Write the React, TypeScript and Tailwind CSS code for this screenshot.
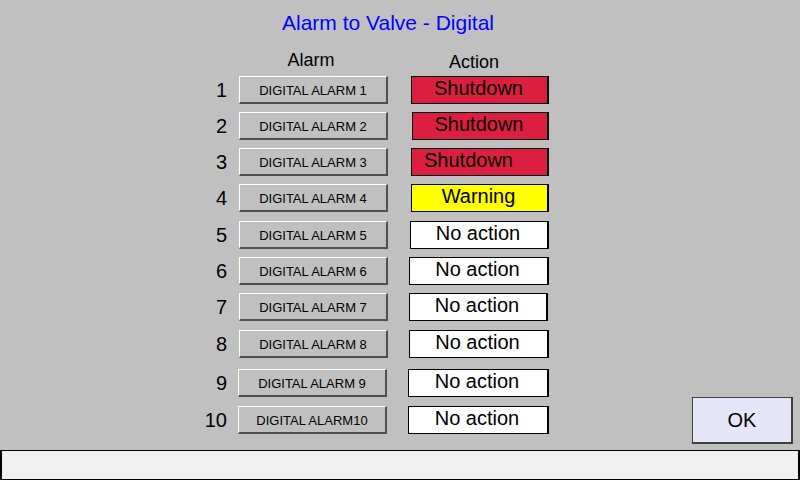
import React from "react";

type Row = {
  n: string;
  label: string;
  action: string;
  kind: "red" | "yellow" | "white";
  rowCls: string;
  btnCls: string;
  actCls: string;
};

const rows: Row[] = [
  { n: "1", label: "DIGITAL ALARM 1", action: "Shutdown", kind: "red", rowCls: "mt-0", btnCls: "ml-[12px]", actCls: "ml-[23px] w-[138px] pr-[2px]" },
  { n: "2", label: "DIGITAL ALARM 2", action: "Shutdown", kind: "red", rowCls: "mt-[8px]", btnCls: "ml-[12px]", actCls: "ml-[24px] w-[137px] pr-[2px]" },
  { n: "3", label: "DIGITAL ALARM 3", action: "Shutdown", kind: "red", rowCls: "mt-[8px]", btnCls: "ml-[12px]", actCls: "ml-[23px] w-[138px] pr-[22px]" },
  { n: "4", label: "DIGITAL ALARM 4", action: "Warning", kind: "yellow", rowCls: "mt-[8px]", btnCls: "ml-[12px]", actCls: "ml-[23px] w-[138px] pr-[2px]" },
  { n: "5", label: "DIGITAL ALARM 5", action: "No action", kind: "white", rowCls: "mt-[9px]", btnCls: "ml-[12px]", actCls: "ml-[22px] w-[139px] pr-[2px]" },
  { n: "6", label: "DIGITAL ALARM 6", action: "No action", kind: "white", rowCls: "mt-[8px]", btnCls: "ml-[12px]", actCls: "ml-[21px] w-[140px] pr-[2px]" },
  { n: "7", label: "DIGITAL ALARM 7", action: "No action", kind: "white", rowCls: "mt-[8px]", btnCls: "ml-[12px]", actCls: "ml-[21px] w-[139px] pr-[2px]" },
  { n: "8", label: "DIGITAL ALARM 8", action: "No action", kind: "white", rowCls: "mt-[9px]", btnCls: "ml-[12px]", actCls: "ml-[21px] w-[140px] pr-[2px]" },
  { n: "9", label: "DIGITAL ALARM 9", action: "No action", kind: "white", rowCls: "mt-[11px]", btnCls: "ml-[11px]", actCls: "ml-[21px] w-[141px] pr-[2px]" },
  { n: "10", label: "DIGITAL ALARM10", action: "No action", kind: "white", rowCls: "mt-[9px]", btnCls: "ml-[11px]", actCls: "ml-[21px] w-[141px] pr-[2px]" },
];

const kindCls: Record<Row["kind"], string> = {
  red: "bg-[#dc1e3f]",
  yellow: "bg-[#ffff00]",
  white: "bg-white",
};

export default function App() {
  return (
    <div
      className="w-[800px] h-[480px] bg-[#c0c0c0] flex flex-col overflow-hidden text-black"
      style={{ fontFamily: '"Liberation Sans", Arial, sans-serif' }}
    >
      <div className="flex flex-1">
        <div className="flex flex-col w-[600px]">
          <div className="mt-[11px] ml-[282px] w-fit text-[21px] leading-[24px] text-[#0000ff]">
            Alarm to Valve - Digital
          </div>
          <div className="mt-[15px] h-[26px] flex items-start text-[18px] leading-[21px]">
            <div className="ml-[239px] w-[149px] text-center pr-[5px]">Alarm</div>
            <div className="ml-[20px] w-[141px] text-center pr-[9px] mt-[2px]">Action</div>
          </div>
          <div className="flex flex-col pl-[190px]">
            {rows.map((r) => (
              <div key={r.n} className={`flex items-center h-[28px] ${r.rowCls}`}>
                <div className="w-[37px] text-right text-[20px] leading-[23px]">{r.n}</div>
                <div
                  className={`${r.btnCls} w-[149px] h-[28px] flex items-center justify-center pt-[2px] text-[13px] leading-[15px] border-t border-l border-white border-b-2 border-r-2 border-b-[#505050] border-r-[#505050]`}
                >
                  {r.label}
                </div>
                <div
                  className={`${r.actCls} ${kindCls[r.kind]} h-[28px] border border-black border-r-2 text-center text-[20px] leading-[23px]`}
                >
                  {r.action}
                </div>
              </div>
            ))}
          </div>
        </div>
        <div className="flex-1 flex flex-col justify-end items-end pr-[7px] pb-[6px]">
          <div className="w-[101px] h-[47px] bg-[#e6e6fa] border border-[#404040] border-b-2 border-r-2 flex items-center justify-center text-[20px] leading-[23px]">
            OK
          </div>
        </div>
      </div>
      <div className="h-[30px] bg-[#f0f0f0] border border-black border-l-2 border-r-2" />
    </div>
  );
}
